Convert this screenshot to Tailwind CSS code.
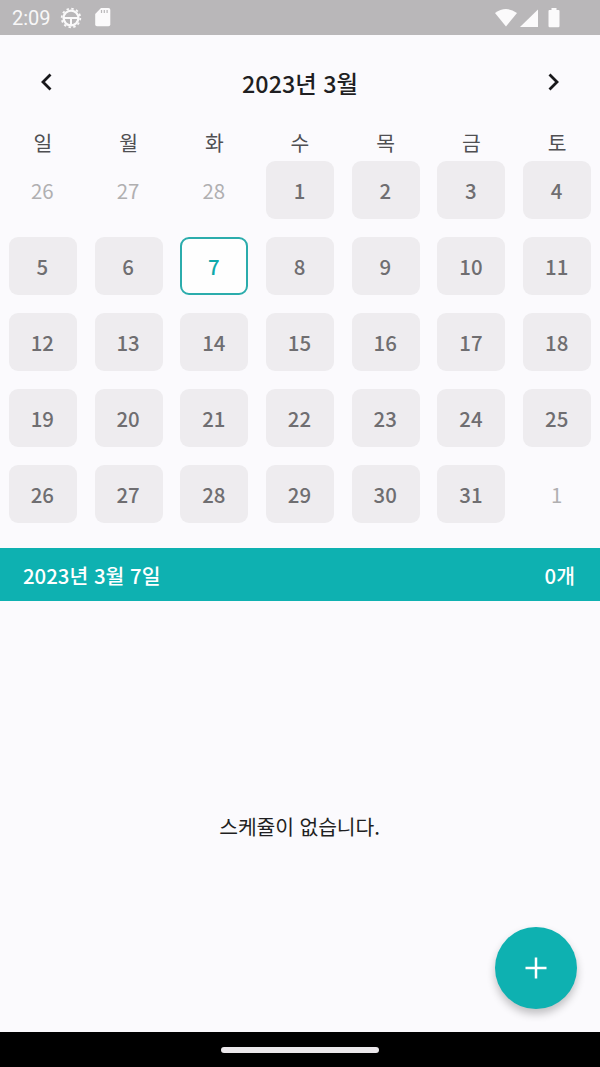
<!DOCTYPE html>
<html lang="ko">
<head>
<meta charset="utf-8">
<meta name="viewport" content="width=device-width">
<title>Calendar</title>
<script src="https://cdn.jsdelivr.net/npm/@tailwindcss/browser@4"></script>
</head>
<body class="w-[600px] h-[1067px] overflow-hidden flex flex-col bg-[#fbfafd] font-['Noto_Sans_CJK_KR',sans-serif] text-[20.4px] text-[#1f1f22]">
<header class="h-[35px] shrink-0 bg-[#b9b7b9] flex items-center justify-between pl-3 pr-[40px] text-white">
  <div class="flex items-center">
    <span class="font-[Roboto,sans-serif] text-[20px] leading-5 w-[48px] text-[#f8f7f8] pt-px">2:09</span>
    <svg class="w-[22px] h-[22px]" viewBox="0 0 22 22" fill="none" stroke="#faf9fa"><circle cx="11" cy="11" r="7.4" stroke-width="2.3"/><circle cx="11" cy="11" r="9.3" stroke-width="1.8" stroke-dasharray="2.4 2.47"/><path d="M4 11h14M11 11v7" stroke-width="2"/></svg>
    <svg class="w-4 h-5 ml-[13px]" viewBox="0 0 16 20"><path d="M6 0h7.500q1.800 0 1.800 1.800v14.700q0 1.800-1.800 1.800h-11.500q-1.800 0-1.800-1.800V6z" fill="#fbfafb"/><path d="M6.500 2v3M9.300 2v3M12.100 2v3" stroke="#b9b7b9" stroke-width="1.200"/></svg>
  </div>
  <div class="flex items-center">
    <svg class="w-[22px] h-[20px]" viewBox="0 0 22 20"><path d="M0 5Q11-3 22 5L11 18.500z" fill="#fbfafb"/></svg>
    <svg class="w-[18px] h-[20px] ml-[3px]" viewBox="0 0 18 20"><path d="M0 19L18 1.500V19z" fill="#fbfafb"/></svg>
    <svg class="w-3 h-5 ml-[10px]" viewBox="0 0 12 20"><path d="M3.500 0h5v2H10.500q1 0 1 1v15q0 1.200-1.200 1.200H1.700Q.5 19.200.5 18V3q0-1 1-1h2z" fill="#fbfafb"/></svg>
  </div>
</header>
<nav class="h-[96px] shrink-0 flex items-center justify-between px-[34px]">
  <svg class="w-6 h-6 -translate-y-px" viewBox="0 0 24 24" fill="none" stroke="#18181b" stroke-width="2.800"><path d="M16.500 4.500L9 12l7.500 7.500"/></svg>
  <h1 class="text-[23.3px] font-medium leading-8">2023년 3월</h1>
  <svg class="w-6 h-6 -translate-y-px" viewBox="0 0 24 24" fill="none" stroke="#18181b" stroke-width="2.800"><path d="M7.500 4.500L15 12l-7.500 7.500"/></svg>
</nav>
<div class="h-[23px] shrink-0 grid grid-cols-7 text-center leading-[23px] text-[#4f4f52]">
  <span>일</span><span>월</span><span>화</span><span>수</span><span>목</span><span>금</span><span>토</span>
</div>
<main id="days" class="h-[394px] shrink-0 pt-[7px] grid grid-cols-7 auto-rows-[58px] gap-y-[18px] content-start justify-items-center"></main>
<section class="h-[53px] shrink-0 bg-[#0eb1b1] text-white font-medium flex items-center justify-between pl-[23px] pr-[25px] pt-px">
  <span>2023년 3월 7일</span><span>0개</span>
</section>
<section class="grow relative flex items-center justify-center pt-[19px]">
  <p class="tracking-[-0.1px] pr-px">스케쥴이 없습니다.</p>
  <button class="absolute right-[23px] bottom-[23px] size-[82px] rounded-full bg-[#0eb1b1] flex items-center justify-center shadow-[0_5px_9px_rgba(0,0,0,0.24)]" aria-label="추가">
    <svg class="size-[22px]" viewBox="0 0 22 22" stroke="#fff" stroke-width="2.500"><path d="M11 .5v21M.5 11h21"/></svg>
  </button>
</section>
<footer class="h-[35px] shrink-0 bg-black flex items-center justify-center"><div class="w-[158px] h-[6px] rounded-full bg-[#ebe8eb]"></div></footer>
<script>
const days = document.getElementById('days');
for (let i = 0; i < 35; i++) {
  const d = document.createElement('div');
  const n = i - 2;
  const outside = n < 1 || n > 31;
  d.textContent = n < 1 ? n + 28 : n > 31 ? n - 31 : n;
  d.className = outside
    ? 'w-[68px] flex items-center justify-center pr-px text-[#b0afb1]'
    : n === 7
      ? 'w-[68px] flex items-center justify-center rounded-[9px] border-2 border-[#2bacac] bg-[#fefefe] font-medium pr-px text-[#0ea9ab]'
      : 'w-[68px] flex items-center justify-center rounded-[9px] bg-[#eeecef] font-medium pr-px text-[#6f6e71]';
  days.append(d);
}
</script>
</body>
</html>
